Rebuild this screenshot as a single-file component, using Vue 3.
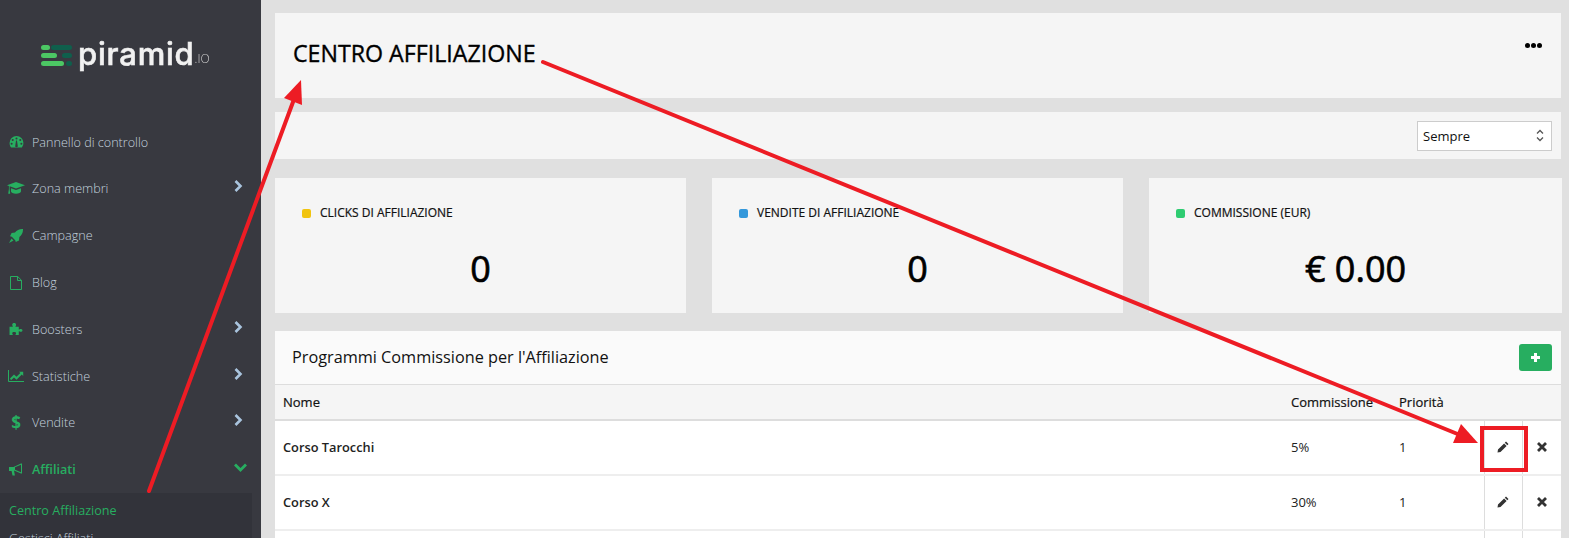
<script setup>
const menu = [
  { label: 'Pannello di controllo', icon: 'gauge' },
  { label: 'Zona membri', icon: 'cap', arrow: true },
  { label: 'Campagne', icon: 'rocket' },
  { label: 'Blog', icon: 'file' },
  { label: 'Boosters', icon: 'puzzle', arrow: true },
  { label: 'Statistiche', icon: 'chart', arrow: true },
  { label: 'Vendite', icon: 'dollar', arrow: true },
  { label: 'Affiliati', icon: 'bullhorn', open: true },
]

const stats = [
  { label: 'CLICKS DI AFFILIAZIONE', value: '0', color: '#f1c40f' },
  { label: 'VENDITE DI AFFILIAZIONE', value: '0', color: '#3498db' },
  { label: 'COMMISSIONE (EUR)', value: '€ 0.00', color: '#2ecc71' },
]

const rows = [
  { name: 'Corso Tarocchi', commission: '5%', priority: '1' },
  { name: 'Corso X', commission: '30%', priority: '1' },
  { name: '', commission: '', priority: '' },
]
</script>

<template>
  <div class="page">
    <aside class="sidebar">
      <div class="logo">
        <svg class="logo-bars" width="32" height="24" viewBox="0 0 32 24">
          <rect x="0" y="1" width="9" height="5" rx="2.5" fill="#4cc764" />
          <rect x="10" y="1" width="21" height="5" rx="2.5" fill="#0f5f4c" />
          <rect x="0" y="9" width="16" height="5" rx="2.5" fill="#4cc764" />
          <rect x="21" y="9" width="10" height="5" rx="2.5" fill="#0f5f4c" />
          <rect x="0" y="17" width="23" height="5" rx="2.5" fill="#4cc764" />
          <rect x="25" y="17" width="6" height="5" rx="2.5" fill="#0f5f4c" />
        </svg>
        <span class="logo-name">piramid</span><span class="logo-io">.IO</span>
      </div>

      <nav class="menu">
        <div v-for="item in menu" :key="item.label" class="menu-item" :class="{ active: item.open }">
          <span class="menu-icon">
            <svg v-if="item.icon === 'gauge'" width="15" height="12" viewBox="0 0 15 13">
              <path fill="#27ae60" d="M7.5 0A7.5 7.5 0 0 0 0 7.5c0 2 .6 3.700 1.700 5h11.600A7.400 7.400 0 0 0 15 7.5 7.5 7.5 0 0 0 7.5 0Z" />
              <circle cx="7.5" cy="2.600" r="1.100" fill="#383940" />
              <circle cx="3.400" cy="4.400" r="1.100" fill="#383940" />
              <circle cx="11.600" cy="4.400" r="1.100" fill="#383940" />
              <circle cx="2.200" cy="8.400" r="1.100" fill="#383940" />
              <circle cx="12.800" cy="8.400" r="1.100" fill="#383940" />
              <path fill="#383940" d="M6.200 10.400 7 5h1l.8 5.400a1.400 1.400 0 1 1-2.600 0Z" />
            </svg>
            <svg v-else-if="item.icon === 'cap'" width="18" height="13" viewBox="0 0 18 13">
              <path fill="#27ae60" d="M9 0 18 3.200 9 6.400 2.600 4.200v2.900l.6 4.600H1.200l.7-4.600V3.900L0 3.200Z" />
              <path fill="#27ae60" d="M4 6.200 9 8l5-1.800v3.400c0 1.200-2.300 2.200-5 2.200s-5-1-5-2.200Z" />
            </svg>
            <svg v-else-if="item.icon === 'rocket'" width="14" height="14" viewBox="0 0 14 14">
              <path fill="#27ae60" d="M14 0c.1 3.400-1 6.100-3.600 8l-.4 3.400L6.800 13l-.6-1.800-3.400-3.400L1 7.200l1.600-3.200L6 3.600C7.900 1 10.600 -.1 14 0Z" />
              <path fill="#27ae60" d="M2.500 9.500 4.500 11.500 0 14Z" />
            </svg>
            <svg v-else-if="item.icon === 'file'" width="12" height="14" viewBox="0 0 12 14" fill="none" stroke="#27ae60">
              <path d="M.5.5h7.200l3.800 3.800v9.200H.5Z" />
              <path d="M7.500.5v4h4" />
            </svg>
            <svg v-else-if="item.icon === 'puzzle'" width="14" height="12" viewBox="0 0 14 13">
              <path fill="#27ae60" d="M0 4h3.500c.4-.6-.6-1-.6-2.200C2.900.7 3.800 0 5 0s2.100.7 2.100 1.800C7.100 3 6.200 3.400 6.500 4H10v3c.6.300 1-.6 2-.6 1.200 0 2 .6 2 1.600s-.8 1.600-2 1.600c-1 0-1.400-.9-2-.6V13H6.500c-.3-.6.600-1 .6-2 0-.8-.9-1.300-2.100-1.300S2.900 10.200 2.900 11c0 1 1 1.400.6 2H0Z" />
            </svg>
            <svg v-else-if="item.icon === 'chart'" width="16" height="12" viewBox="0 0 16 12">
              <path fill="none" stroke="#27ae60" d="M.5 0v11.500H16" />
              <path fill="#27ae60" d="M2 8.500 6 4.500l2.500 2.300L12.300 3 11 1.700h4.200v4.200l-1.400-1.400L8.500 9.700 6 7.400 3 10.300Z" />
            </svg>
            <span v-else-if="item.icon === 'dollar'" class="dollar">$</span>
            <svg v-else-if="item.icon === 'bullhorn'" width="14" height="13" viewBox="0 0 14 13">
              <path fill="#27ae60" d="M0 4h4.500L12 .5h1v10h-1L5 7.400l.9 5.100H3.500L2.600 8H0Z" />
              <path fill="#383940" d="M6 4.200 12 1.700v7.600L6 6.800Z" />
            </svg>
          </span>
          <span class="menu-label">{{ item.label }}</span>
          <svg v-if="item.arrow" class="menu-arrow" width="9" height="12" viewBox="0 0 9 12">
            <path fill="none" stroke="#a9c4de" stroke-width="2.600" d="M1.500 1 6.500 6l-5 5" />
          </svg>
          <svg v-if="item.open" class="menu-arrow open" width="13" height="9" viewBox="0 0 13 9">
            <path fill="none" stroke="#27ae60" stroke-width="2.800" d="M1 1.500 6.500 7 12 1.500" />
          </svg>
        </div>
      </nav>

      <div class="submenu">
        <div class="sub-item current">Centro Affiliazione</div>
        <div class="sub-item">Gestisci Affiliati</div>
      </div>
    </aside>

    <main class="content">
      <section class="head card">
        <h1>CENTRO AFFILIAZIONE</h1>
        <div class="dots"><i></i><i></i><i></i></div>
      </section>

      <section class="toolbar card">
        <div class="select">
          <span>Sempre</span>
          <svg width="8" height="13" viewBox="0 0 8 13">
            <path fill="none" stroke="#555" stroke-width="1.300" d="M1 4.500 4 1.500l3 3M1 8.500l3 3 3-3" />
          </svg>
        </div>
      </section>

      <section class="stats">
        <div v-for="stat in stats" :key="stat.label" class="stat card">
          <div class="stat-label"><i :style="{ background: stat.color }"></i>{{ stat.label }}</div>
          <div class="stat-value">{{ stat.value }}</div>
        </div>
      </section>

      <section class="panel">
        <div class="panel-head">
          <h2>Programmi Commissione per l'Affiliazione</h2>
          <button class="add">
            <svg width="9" height="9" viewBox="0 0 9 9"><path fill="#fff" d="M3 0h3v3h3v3H6v3H3V6H0V3h3Z" /></svg>
          </button>
        </div>
        <table>
          <thead>
            <tr>
              <th>Nome</th>
              <th class="col-com">Commissione</th>
              <th class="col-pri">Priorità</th>
              <th class="col-act"></th>
              <th class="col-act"></th>
            </tr>
          </thead>
          <tbody>
            <tr v-for="(row, i) in rows" :key="i">
              <td class="name">{{ row.name }}</td>
              <td>{{ row.commission }}</td>
              <td>{{ row.priority }}</td>
              <td class="act">
                <svg v-if="row.name" width="12" height="12" viewBox="0 0 12 12">
                  <path fill="#333" d="M9 0.500 11.500 3l-1.200 1.200-2.500-2.500ZM7.100 2.400l2.500 2.500L3.500 11 0.500 11.500 1 8.500Z" />
                </svg>
              </td>
              <td class="act">
                <svg v-if="row.name" width="10" height="10" viewBox="0 0 10 10">
                  <path fill="none" stroke="#333" stroke-width="2.800" d="M1 1l8 8M9 1 1 9" />
                </svg>
              </td>
            </tr>
          </tbody>
        </table>
      </section>
    </main>

    <svg class="marks" width="1569" height="538" viewBox="0 0 1569 538">
      <path fill="none" stroke="#ed1c24" stroke-width="4" stroke-linecap="round" d="M149 491 293 102" />
      <path fill="#ed1c24" d="M301 80 302 105 284 98Z" />
      <path fill="none" stroke="#ed1c24" stroke-width="4" stroke-linecap="round" d="M543 62 1460 435" />
      <path fill="#ed1c24" d="M1478 443 1453 443 1461 424Z" />
      <rect x="1482" y="428" width="44" height="42" fill="none" stroke="#ed1c24" stroke-width="4" />
    </svg>
  </div>
</template>

<style>
html, body {
  margin: 0;
  overflow: hidden;
}
</style>

<style scoped>
.page {
  position: relative;
  display: flex;
  width: 1569px;
  height: 538px;
  overflow: hidden;
  background: #e0e0e0;
  font-family: 'Open Sans', sans-serif;
  color: #111;
}

.sidebar {
  flex: none;
  width: 261px;
  height: 538px;
  overflow: hidden;
  background: #383940;
}

.logo {
  display: flex;
  align-items: flex-end;
  height: 70px;
  padding-left: 41px;
  color: #f1f1f1;
  filter: blur(0.3px);
}

.logo-bars {
  margin: 0 5px 2px 0;
}

.logo-name {
  font-family: 'Inter', sans-serif;
  font-size: 31px;
  font-weight: 500;
  letter-spacing: 0.8px;
  -webkit-text-stroke: 0.6px #f1f1f1;
  line-height: 38px;
  margin-bottom: -3px;
}

.logo-io {
  font-size: 12px;
  font-weight: 300;
  line-height: 16px;
  color: #ccc;
  margin-bottom: 3px;
}

.menu {
  padding-top: 48.800px;
}

.menu-item {
  display: flex;
  align-items: center;
  height: 46.800px;
  padding-left: 7px;
  font-size: 12.600px;
  font-weight: 300;
  color: #c3d2df;
}

.menu-icon {
  display: flex;
  justify-content: center;
  width: 18px;
  margin-right: 7px;
}

.menu-arrow {
  margin-left: auto;
  margin-right: 18px;
  margin-top: -5px;
}

.menu-arrow.open {
  margin-right: 14px;
}

.dollar {
  font-size: 17px;
  font-weight: 700;
  line-height: 17px;
  color: #27ae60;
}

.active {
  font-weight: 600;
  color: #27ae60;
}

.submenu {
  width: 252px;
  padding-top: 3.500px;
  background: #32333a;
}

.sub-item {
  height: 27px;
  padding-left: 9px;
  font-size: 12.600px;
  font-weight: 300;
  line-height: 27px;
  color: #c3d2df;
}

.sub-item.current {
  color: #27ae60;
  font-weight: 400;
  margin-bottom: 1px;
}

.content {
  flex: none;
  width: 1286px;
  margin-left: 14px;
  padding-top: 13px;
}

.card {
  background: #f5f5f5;
}

.head {
  display: flex;
  justify-content: space-between;
  height: 85px;
  padding: 0 19px 0 18px;
  box-sizing: border-box;
}

h1 {
  margin: 25px 0 0;
  font-size: 23.200px;
  font-weight: 400;
  -webkit-text-stroke: 0.35px #000;
  line-height: 30px;
  color: #000;
}

.dots {
  display: flex;
  gap: 1px;
  margin: 30px 0 0;
}

.dots i {
  width: 5px;
  height: 5px;
  border-radius: 50%;
  background: #000;
}

.toolbar {
  display: flex;
  justify-content: flex-end;
  align-items: center;
  height: 47px;
  margin-top: 14px;
  padding-right: 9px;
}

.select {
  display: flex;
  justify-content: space-between;
  align-items: center;
  box-sizing: border-box;
  width: 135px;
  height: 30px;
  padding: 0 7px 0 5px;
  border: 1px solid #ccc;
  background: #fff;
  font-size: 13px;
  color: #111;
}

.stats {
  display: grid;
  grid-template-columns: 411px 411px 413px;
  gap: 26px;
  margin-top: 19px;
}

.stat {
  height: 135px;
  box-sizing: border-box;
  padding: 27px 27px 0;
}

.stat-label {
  display: flex;
  align-items: center;
  font-size: 12px;
  font-weight: 400;
  -webkit-text-stroke: 0.2px #111;
  line-height: 16px;
  color: #111;
}

.stat-label i {
  width: 9px;
  height: 9px;
  margin-right: 9px;
  border-radius: 2px;
}

.stat-value {
  margin-top: 25px;
  font-size: 36px;
  font-weight: 400;
  -webkit-text-stroke: 0.7px #000;
  line-height: 46px;
  text-align: center;
  color: #000;
}

.panel {
  margin-top: 18px;
  background: #fff;
}

.panel-head {
  display: flex;
  justify-content: space-between;
  align-items: center;
  height: 53px;
  padding: 0 9px 0 17px;
  background: #fafafa;
  border-bottom: 1px solid #ddd;
}

h2 {
  margin: 0 0 2px;
  font-size: 16.250px;
  font-weight: 400;
  color: #111;
}

.add {
  width: 33px;
  height: 27px;
  padding: 0;
  border: 0;
  border-radius: 3px;
  background: #27ae60;
}

table {
  width: 100%;
  table-layout: fixed;
  border-collapse: collapse;
  font-size: 13px;
}

th {
  box-sizing: border-box;
  height: 35px;
  padding: 0 8px;
  background: #f5f5f5;
  border-bottom: 2px solid #ddd;
  font-weight: 400;
  -webkit-text-stroke: 0.2px #111;
  text-align: left;
}

td {
  box-sizing: border-box;
  height: 55px;
  padding: 0 8px 2px;
  border-bottom: 2px solid #eee;
  color: #222;
}

.col-com {
  width: 108px;
  padding-left: 10px;
}

td:nth-child(2),
td:nth-child(3) {
  padding-left: 10px;
}

.col-pri {
  width: 95px;
  padding-left: 10px;
}

.col-act {
  width: 38.500px;
}

.name {
  font-size: 12.800px;
  font-weight: 600;
}

.act {
  text-align: center;
  border-left: 1px solid #ddd;
  padding: 0 0 2px;
}

.act svg {
  display: block;
  margin: 0 auto;
}

.marks {
  position: absolute;
  top: 0;
  left: 0;
  pointer-events: none;
}
</style>
